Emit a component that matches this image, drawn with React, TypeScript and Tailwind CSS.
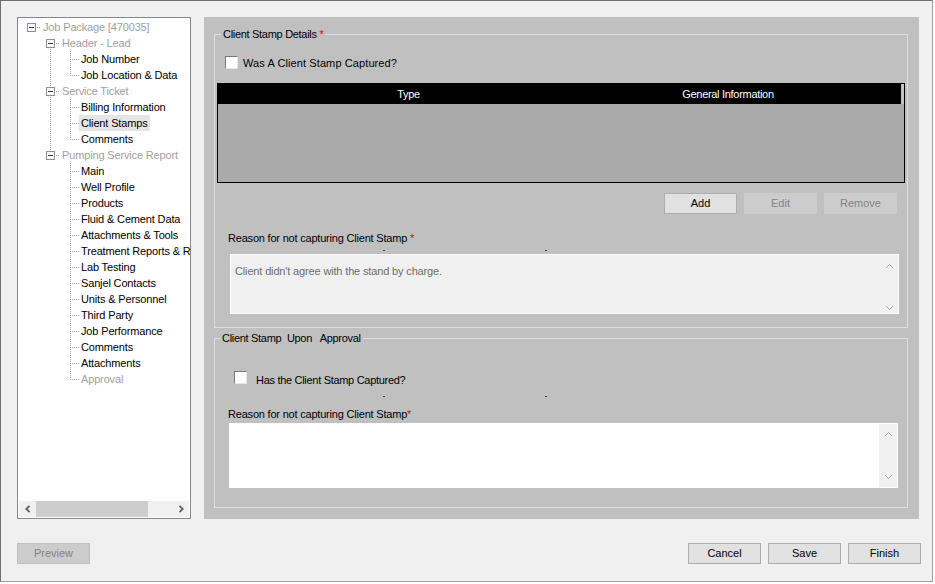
import React from 'react';

type Item = {
  t: string;
  l: 0 | 1 | 2;
  dis?: boolean;
  sel?: boolean;
  firstL1?: boolean;
  lastL1?: boolean;
  parentLast?: boolean;
  lastChild?: boolean;
};

const items: Item[] = [
  { t: 'Job Package [470035]', l: 0, dis: true },
  { t: 'Header - Lead', l: 1, dis: true, firstL1: true },
  { t: 'Job Number', l: 2 },
  { t: 'Job Location & Data', l: 2, lastChild: true },
  { t: 'Service Ticket', l: 1, dis: true },
  { t: 'Billing Information', l: 2 },
  { t: 'Client Stamps', l: 2, sel: true },
  { t: 'Comments', l: 2, lastChild: true },
  { t: 'Pumping Service Report', l: 1, dis: true, lastL1: true },
  { t: 'Main', l: 2, parentLast: true },
  { t: 'Well Profile', l: 2, parentLast: true },
  { t: 'Products', l: 2, parentLast: true },
  { t: 'Fluid & Cement Data', l: 2, parentLast: true },
  { t: 'Attachments & Tools', l: 2, parentLast: true },
  { t: 'Treatment Reports & Results', l: 2, parentLast: true },
  { t: 'Lab Testing', l: 2, parentLast: true },
  { t: 'Sanjel Contacts', l: 2, parentLast: true },
  { t: 'Units & Personnel', l: 2, parentLast: true },
  { t: 'Third Party', l: 2, parentLast: true },
  { t: 'Job Performance', l: 2, parentLast: true },
  { t: 'Comments', l: 2, parentLast: true },
  { t: 'Attachments', l: 2, parentLast: true },
  { t: 'Approval', l: 2, parentLast: true, lastChild: true, dis: true },
];

const dot = {
  stroke: '#a0a0a0',
  strokeWidth: 1,
  strokeDasharray: '1 1',
  shapeRendering: 'crispEdges' as const,
};

function Box({ x }: { x: number }) {
  return (
    <g>
      <rect x={x + 0.5} y={4.5} width={8} height={8} fill="#f7f7f7" stroke="#8e8f8f" shapeRendering="crispEdges" />
      <line x1={x + 2} y1={8.5} x2={x + 7} y2={8.5} stroke="#3c3c3c" shapeRendering="crispEdges" />
    </g>
  );
}

function Conn({ it }: { it: Item }) {
  const w = it.l === 0 ? 23 : it.l === 1 ? 42 : 61;
  return (
    <svg width={w} height={16} className="shrink-0">
      {it.l === 0 && (
        <>
          <Box x={9} />
          <line x1={19} y1={8.5} x2={23} y2={8.5} {...dot} />
        </>
      )}
      {it.l === 1 && (
        <>
          {!it.firstL1 && <line x1={32.5} y1={0} x2={32.5} y2={4} {...dot} />}
          {!it.lastL1 && <line x1={32.5} y1={14} x2={32.5} y2={16} {...dot} />}
          <Box x={28} />
          <line x1={38} y1={8.5} x2={42} y2={8.5} {...dot} />
        </>
      )}
      {it.l === 2 && (
        <>
          {!it.parentLast && <line x1={32.5} y1={0} x2={32.5} y2={16} {...dot} />}
          <line x1={52.5} y1={0} x2={52.5} y2={it.lastChild ? 9 : 16} {...dot} />
          <line x1={54} y1={8.5} x2={61} y2={8.5} {...dot} />
        </>
      )}
    </svg>
  );
}

function Chevron({ dir }: { dir: 'left' | 'right' }) {
  return (
    <svg width={8} height={8} viewBox="0 0 8 8">
      <path
        d={dir === 'left' ? 'M5.5 0.8 L2.3 4 L5.5 7.2' : 'M2.5 0.8 L5.7 4 L2.5 7.2'}
        fill="none"
        stroke="#606060"
        strokeWidth={1.8}
      />
    </svg>
  );
}

function SmallArrow({ dir }: { dir: 'up' | 'down' }) {
  return (
    <svg width={9} height={6} viewBox="0 0 9 6">
      <path
        d={dir === 'up' ? 'M1 5 L4.5 1.5 L8 5' : 'M1 1 L4.5 4.5 L8 1'}
        fill="none"
        stroke="#a6a6a6"
        strokeWidth={1}
      />
    </svg>
  );
}

function Btn({ children, disabled }: { children: React.ReactNode; disabled?: boolean }) {
  return (
    <div
      className={
        disabled
          ? 'w-[73px] h-[21px] flex items-center justify-center text-[11px] bg-[#cccccc] border border-[#cccccc] text-[#838383]'
          : 'w-[73px] h-[21px] flex items-center justify-center text-[11px] bg-[#e1e1e1] border border-[#adadad] text-black'
      }
    >
      {children}
    </div>
  );
}

function CheckBox() {
  return (
    <span className="block w-[13px] h-[13px] shrink-0 bg-white border border-[#7a7a7a] border-r-[#e6e6e6] border-b-[#e6e6e6]" />
  );
}

export default function App() {
  return (
    <div className="w-[935px] h-[584px] bg-white font-['Liberation_Sans',Arial,sans-serif] text-[11px] text-black">
      <div className="w-[933px] h-[582px] bg-[#f0f0f0] border-t border-l border-t-[#6e6e6e] border-l-[#6e6e6e] border-r border-b border-r-[#a0a0a0] border-b-[#a0a0a0] flex flex-col">
        {/* top area */}
        <div className="flex pl-[16px] pr-[13px] pt-[16px] gap-[13px]">
          {/* tree */}
          <div className="w-[174px] h-[502px] border border-[#828790] bg-white flex flex-col">
            <div className="flex-1 overflow-hidden pt-[1px]">
              {items.map((it, i) => (
                <div key={i} className="flex h-[16px] items-center whitespace-nowrap">
                  <Conn it={it} />
                  <span
                    className={
                      (it.sel ? 'bg-[#e5e5e5] ' : '') +
                      (it.dis ? 'text-[#a0a0a0] ' : 'text-black ') +
                      'px-[2px] leading-[16px] h-[16px] tracking-[-0.15px]'
                    }
                  >
                    {it.t}
                  </span>
                </div>
              ))}
            </div>
            <div className="mx-[1px] mb-[1px] h-[16px] bg-[#f0f0f0] flex items-center">
              <div className="w-[17px] h-[16px] flex items-center justify-center">
                <Chevron dir="left" />
              </div>
              <div className="w-[112px] h-[16px] bg-[#cdcdcd]" />
              <div className="flex-1" />
              <div className="w-[17px] h-[16px] flex items-center justify-center">
                <Chevron dir="right" />
              </div>
            </div>
          </div>

          {/* main panel */}
          <div className="w-[715px] h-[502px] bg-[#c0c0c0] pt-[10px] pl-[10px] pr-[11px] pb-[11px] flex flex-col">
            {/* group 1 */}
            <fieldset className="border border-[#dedede] min-w-0 flex flex-col">
              <legend className="ml-[6px] px-[2px] text-[11px] leading-[14px] tracking-[-0.3px]">
                Client Stamp Details <span className="text-[#e00000]">*</span>
              </legend>
              <div className="mt-[15px] ml-[10px] h-[13px] flex items-center gap-[5px]">
                <CheckBox />
                <span className="leading-[14px] tracking-[0.1px]">Was A Client Stamp Captured?</span>
              </div>
              <div className="mt-[14px] mx-[2px] h-[100px] border border-black bg-[#aaaaaa] flex flex-col">
                <div className="h-[20px] flex text-white">
                  <div className="flex-1 bg-black flex">
                    <div className="w-[381px] flex items-center justify-center tracking-[-0.3px]">Type</div>
                    <div className="w-[258px] flex items-center justify-center tracking-[-0.3px]">General Information</div>
                  </div>
                  <div className="w-[3px] bg-[#c4c4c4]" />
                </div>
              </div>
              <div className="mt-[10px] mr-[10px] flex justify-end gap-[7px]">
                <Btn>Add</Btn>
                <Btn disabled>Edit</Btn>
                <Btn disabled>Remove</Btn>
              </div>
              <div className="mt-[17px] ml-[13px] leading-[14px] tracking-[-0.2px]">
                Reason for not capturing Client Stamp <span className="text-[#e00000]">*</span>
              </div>
              <div className="h-[9px] pt-[5px] flex">
                <span className="ml-[168px] w-[2px] h-[1px] bg-[#5a3a3a]" />
                <span className="ml-[160px] w-[2px] h-[1px] bg-[#404040]" />
              </div>
              <div className="ml-[15px] w-[669px] h-[60px] border border-white bg-[#f0f0f0] flex">
                <div className="flex-1 pl-[4px] pt-[9px] leading-[14px] text-[#6d6d6d] tracking-[-0.15px]">
                  Client didn't agree with the stand by charge.
                </div>
                <div className="w-[18px] flex flex-col items-center justify-between pt-[8px] pb-[2px]">
                  <SmallArrow dir="up" />
                  <SmallArrow dir="down" />
                </div>
              </div>
              <div className="h-[13px]" />
            </fieldset>

            {/* group 2 */}
            <fieldset className="mt-[3px] border border-[#dedede] min-w-0 flex flex-col">
              <legend className="ml-[5px] px-[2px] text-[11px] leading-[14px] tracking-[-0.3px] whitespace-pre">
                {'Client Stamp  Upon   Approval'}
              </legend>
              <div className="mt-[26px] ml-[19px] h-[13px] flex items-start gap-[9px]">
                <CheckBox />
                <span className="mt-[2px] leading-[14px] tracking-[-0.3px]">Has the Client Stamp Captured?</span>
              </div>
              <div className="mt-[12px] h-[1px] flex">
                <span className="ml-[168px] w-[2px] h-[1px] bg-[#5a3a3a]" />
                <span className="ml-[160px] w-[2px] h-[1px] bg-[#404040]" />
              </div>
              <div className="mt-[10px] ml-[13px] leading-[14px] tracking-[-0.2px]">
                Reason for not capturing Client Stamp<span className="text-[#e00000]">*</span>
              </div>
              <div className="mt-[2px] ml-[14px] w-[669px] h-[65px] border border-white bg-white flex">
                <div className="flex-1" />
                <div className="w-[18px] bg-[#f0f0f0] flex flex-col items-center justify-between pt-[7px] pb-[7px]">
                  <SmallArrow dir="up" />
                  <SmallArrow dir="down" />
                </div>
              </div>
              <div className="h-[19px]" />
            </fieldset>
          </div>
        </div>

        {/* bottom buttons */}
        <div className="mt-[24px] pl-[16px] pr-[11px] flex items-center">
          <div className="w-[73px] h-[21px] flex items-center justify-center bg-[#cccccc] border border-[#bfbfbf] text-[#838383]">
            Preview
          </div>
          <div className="flex-1" />
          <div className="flex gap-[7px]">
            <Btn>Cancel</Btn>
            <Btn>Save</Btn>
            <Btn>Finish</Btn>
          </div>
        </div>
      </div>
    </div>
  );
}
